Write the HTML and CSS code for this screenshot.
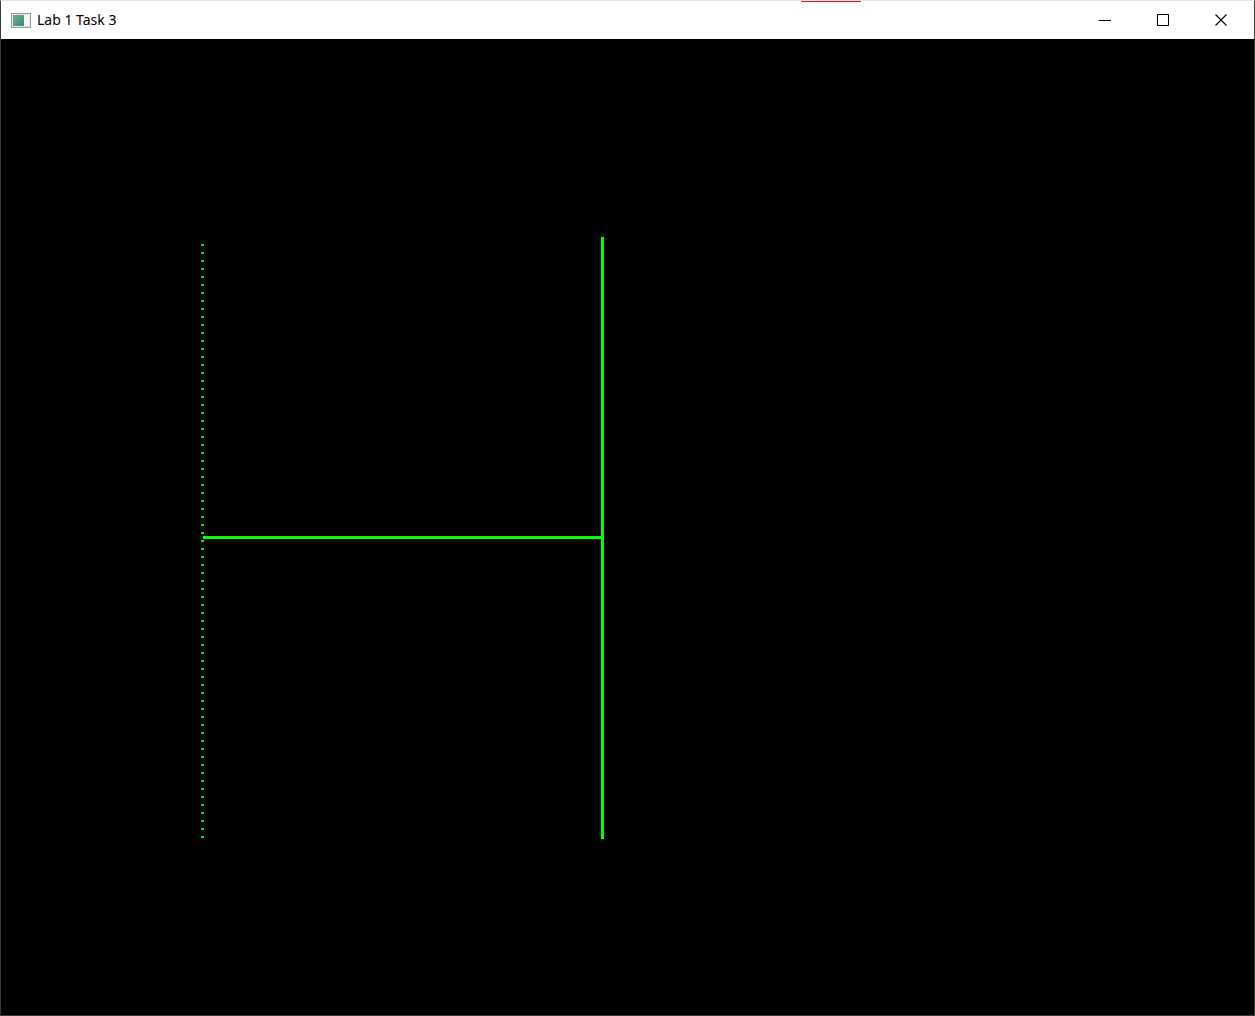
FILE: index.html
```html
<!DOCTYPE html>
<html>
<head>
<meta charset="utf-8">
<title>Lab 1 Task 3</title>
<link rel="stylesheet" href="styles.css">
</head>
<body>
<div class="window">
  <div class="edge-mark"></div>
  <div class="titlebar">
    <div class="title">
      <svg class="app-icon" width="20" height="15" viewBox="0 0 20 15">
        <defs>
          <linearGradient id="g" x1="0" y1="0" x2="1" y2="1">
            <stop offset="0" stop-color="#6fa7c4"/>
            <stop offset="0.5" stop-color="#4fa26e"/>
            <stop offset="1" stop-color="#2f7fb3"/>
          </linearGradient>
        </defs>
        <rect x="0.5" y="0.5" width="19" height="14" fill="#e8e8e8" stroke="#9a9a9a"/>
        <rect x="2" y="2" width="11" height="11" fill="url(#g)"/>
        <rect x="13" y="2" width="5" height="11" fill="#f6f6f6"/>
      </svg>
      <span class="title-text">Lab 1 Task 3</span>
    </div>
    <div class="controls">
      <div class="ctl">
        <svg width="12" height="12" viewBox="0 0 12 12"><line x1="0" y1="6.5" x2="12" y2="6.5" stroke="#000" stroke-width="1"/></svg>
      </div>
      <div class="ctl">
        <svg width="12" height="12" viewBox="0 0 12 12"><rect x="0.5" y="0.5" width="11" height="11" fill="none" stroke="#000" stroke-width="1"/></svg>
      </div>
      <div class="ctl">
        <svg width="12" height="12" viewBox="0 0 12 12"><path d="M0.5 0.5 L11.5 11.5 M11.5 0.5 L0.5 11.5" stroke="#000" stroke-width="1.1" fill="none"/></svg>
      </div>
    </div>
  </div>
  <div class="canvas">
    <svg class="drawing" width="1253" height="976" viewBox="0 0 1253 976" shape-rendering="crispEdges">
      <line x1="201.5" y1="205" x2="201.5" y2="799" stroke="#00f000" stroke-width="3" stroke-dasharray="2 6"/>
      <line x1="202" y1="498.5" x2="600" y2="498.5" stroke="#00ff00" stroke-width="3"/>
      <line x1="601.5" y1="198" x2="601.5" y2="800" stroke="#00ff00" stroke-width="3"/>
    </svg>
  </div>
</div>
</body>
</html>
```

FILE: styles.css
```css
html, body {
  margin: 0;
  padding: 0;
  background: #2b2b2b;
}

.window {
  width: 1255px;
  height: 1016px;
  box-sizing: border-box;
  border: 1px solid #3a3a3a;
  border-top: 1px solid #e6e6e6;
  display: flex;
  flex-direction: column;
  background: #000;
  overflow: hidden;
  position: relative;
}

.edge-mark {
  position: absolute;
  top: -1px;
  left: 800px;
  width: 60px;
  height: 2px;
  background: #e81123;
  z-index: 2;
}

.titlebar {
  height: 38px;
  flex: 0 0 38px;
  background: #ffffff;
  display: flex;
  justify-content: space-between;
  align-items: stretch;
}

.title {
  display: flex;
  align-items: center;
  padding-left: 10px;
  gap: 6px;
}

.app-icon {
  display: block;
}

.title-text {
  font-family: "Noto Sans", "Open Sans", sans-serif;
  font-size: 14px;
  color: #000;
  margin-top: -2px;
}

.controls {
  display: flex;
  margin-right: 4px;
}

.ctl {
  width: 58px;
  display: flex;
  align-items: center;
  justify-content: center;
}

.ctl svg {
  display: block;
}

.canvas {
  flex: 1 1 auto;
  background: #000;
}

.drawing {
  display: block;
}
```
